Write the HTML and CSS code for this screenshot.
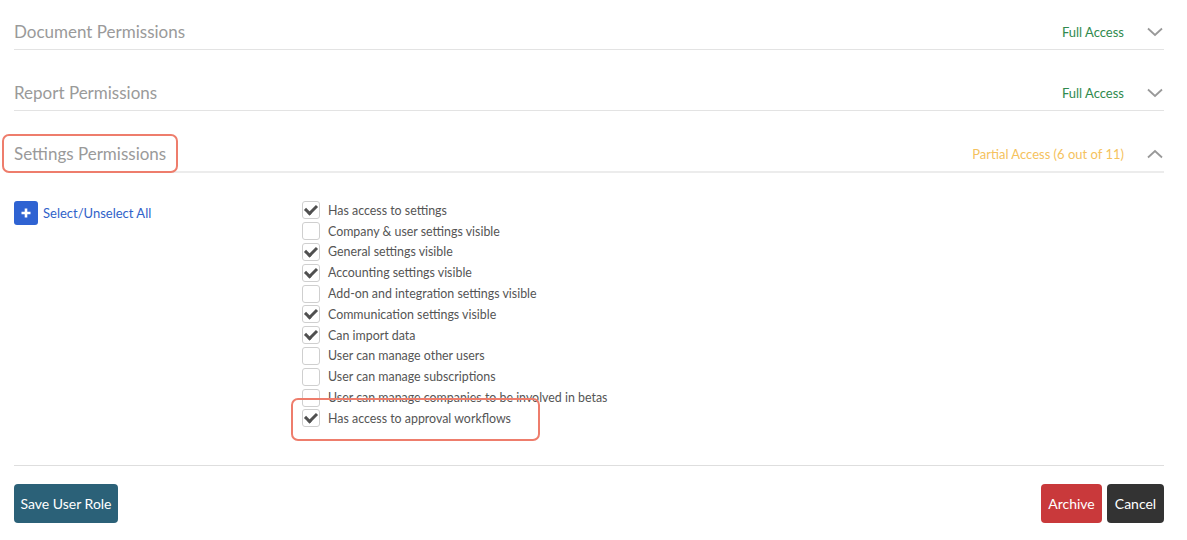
FILE: index.html
```html
<!DOCTYPE html>
<html lang="en">
<head>
<meta charset="utf-8">
<title>User Role Permissions</title>
<link rel="stylesheet" href="styles.css">
</head>
<body>
<div class="page">
  <section class="panel">
    <div class="panel-head">
      <span class="panel-title">Document Permissions</span>
      <span class="status status-full">Full Access</span>
      <svg class="chev" viewBox="0 0 16 10" width="16" height="10"><path d="M1 1.5 L8 8 L15 1.5" fill="none" stroke="#999" stroke-width="1.8"/></svg>
    </div>
  </section>
  <section class="panel">
    <div class="panel-head">
      <span class="panel-title">Report Permissions</span>
      <span class="status status-full">Full Access</span>
      <svg class="chev" viewBox="0 0 16 10" width="16" height="10"><path d="M1 1.5 L8 8 L15 1.5" fill="none" stroke="#999" stroke-width="1.8"/></svg>
    </div>
  </section>
  <section class="panel panel-open">
    <div class="panel-head">
      <span class="panel-title annot">Settings Permissions</span>
      <span class="status status-partial">Partial Access (6 out of 11)</span>
      <svg class="chev" viewBox="0 0 16 10" width="16" height="10"><path d="M1 8.5 L8 2 L15 8.5" fill="none" stroke="#999" stroke-width="1.8"/></svg>
    </div>
    <div class="panel-body">
      <div class="side">
        <a class="select-all" href="#">
          <span class="plus-btn"><svg viewBox="0 0 12 12" width="12" height="12"><path d="M6 1.5 V10.5 M1.5 6 H10.5" stroke="#fff" stroke-width="2.6" fill="none"/></svg></span>
          <span>Select/Unselect All</span>
        </a>
      </div>
      <ul class="checks">
        <li class="on"><span class="box"></span>Has access to settings</li>
        <li><span class="box"></span>Company &amp; user settings visible</li>
        <li class="on"><span class="box"></span>General settings visible</li>
        <li class="on"><span class="box"></span>Accounting settings visible</li>
        <li><span class="box"></span>Add-on and integration settings visible</li>
        <li class="on"><span class="box"></span>Communication settings visible</li>
        <li class="on"><span class="box"></span>Can import data</li>
        <li><span class="box"></span>User can manage other users</li>
        <li><span class="box"></span>User can manage subscriptions</li>
        <li><span class="box"></span>User can manage companies to be involved in betas</li>
        <li class="on annot-row"><span class="box"></span>Has access to approval workflows</li>
      </ul>
    </div>
  </section>
  <footer class="actions">
    <button class="btn btn-save">Save User Role</button>
    <div class="actions-right">
      <button class="btn btn-archive">Archive</button>
      <button class="btn btn-cancel">Cancel</button>
    </div>
  </footer>
</div>
</body>
</html>
```

FILE: styles.css
```css
* { box-sizing: border-box; }
html, body { margin: 0; padding: 0; background: #fff; }
body { font-family: Lato, "Open Sans", "Liberation Sans", sans-serif; color: #555; }

.page {
  width: 1150px;
  margin-left: 14px;
  padding-top: 14px;
}

.panel + .panel { margin-top: 25px; }

.panel-head {
  display: flex;
  align-items: center;
  height: 36px;
  border-bottom: 1px solid #e3e3e3;
}
.panel-open .panel-head { border-bottom: 2px solid #ececec; height: 37px; }

.panel-title {
  font-size: 17px;
  color: #9a9a9a;
  flex: 1;
}
.panel-title.annot { flex: 0 0 auto; position: relative; margin-right: auto; }
.panel-title.annot::after {
  content: "";
  position: absolute;
  left: -12px; right: -12px; top: -9px; bottom: -9px;
  border: 2px solid #ee7d6c;
  border-radius: 7px;
}

.status { font-size: 13px; margin-right: 23px; }
.status-full { color: #2f8a4e; }
.status-partial { color: #f5c25d; }
.chev { margin-right: 1px; }

.panel-body {
  display: flex;
  padding-top: 28px;
  padding-bottom: 36px;
  border-bottom: 1px solid #dedede;
}
.side { width: 288px; }
.select-all {
  display: flex;
  align-items: center;
  gap: 5px;
  color: #2f62c9;
  text-decoration: none;
  font-size: 13px;
}
.plus-btn {
  width: 24px; height: 24px;
  border-radius: 3px;
  background: #2f63d2;
  display: flex; align-items: center; justify-content: center;
}

.checks { list-style: none; margin: -1px 0 0; padding: 0; }
.checks li {
  display: flex;
  align-items: center;
  height: 20.8px;
  font-size: 12.4px;
  color: #555;
}
.box {
  width: 18px; height: 18px;
  border: 1px solid #cfcfcf;
  border-radius: 3px;
  margin-right: 8px;
  display: inline-flex;
  align-items: center;
  justify-content: center;
  background: #fff;
}
.checks li.on .box::before {
  content: "";
  width: 9px; height: 5px;
  border-left: 3px solid #505050;
  border-bottom: 3px solid #505050;
  transform: translateY(-1.5px) rotate(-45deg);
}
.annot-row { position: relative; }
.annot-row::after {
  content: "";
  position: absolute;
  left: -11px; width: 245px;
  top: -10px; bottom: -12px;
  border: 2px solid #ee7d6c;
  border-radius: 7px;
}

.actions {
  display: flex;
  justify-content: space-between;
  padding-top: 18px;
}
.actions-right { display: flex; gap: 5px; }
.btn {
  font-family: Lato, "Open Sans", sans-serif;
  font-size: 14px;
  color: #fff;
  border: none;
  border-radius: 4px;
  height: 39px;
  padding: 0;
  white-space: nowrap;
  cursor: pointer;
}
.btn-save { background: #2b6178; width: 104px; }
.btn-archive { background: #c9393b; width: 61px; }
.btn-cancel { background: #333333; width: 57px; }
```
